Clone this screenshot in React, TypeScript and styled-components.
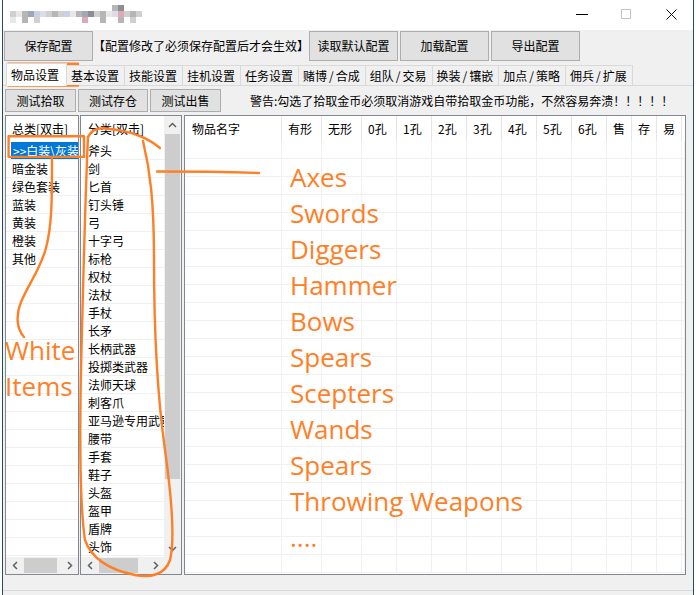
import React from "react";
import styled, { createGlobalStyle } from "styled-components";

const ORANGE = "#ff7f27";

const GlobalStyle = createGlobalStyle`
  html, body { margin: 0; padding: 0; background: #ffffff; }
  body {
    font-family: "Noto Sans CJK SC", "Microsoft YaHei", sans-serif;
    font-size: 12px;
    color: #000;
  }
  *, *::before, *::after { box-sizing: border-box; }
`;

const Stage = styled.div`
  position: relative;
  width: 696px;
  height: 595px;
  overflow: hidden;
  background: #fff;
`;

const Window = styled.div`
  margin-left: 2px;
  width: 692px;
  height: 595px;
  display: flex;
  flex-direction: column;
  background: #f0f0f0;
  border-left: 1px solid #234e5c;
  border-right: 1px solid #234e5c;
`;

const TitleBar = styled.div`
  flex: none;
  height: 30px;
  background: #fff;
  display: flex;
  align-items: flex-start;
`;

const TitleMosaic = styled.svg`
  flex: none;
  margin: 5px 0 0 7px;
`;

const Captions = styled.div`
  margin-left: auto;
  display: flex;
  height: 30px;
`;

const CaptionButton = styled.div<{ $w: number }>`
  width: ${(p) => p.$w}px;
  height: 30px;
  padding-top: 9px;
  display: flex;
  justify-content: center;
  align-items: flex-start;
`;

const ToolRow = styled.div`
  flex: none;
  display: flex;
  align-items: center;
  height: 30px;
  margin-top: 1px;
  padding-left: 1px;
`;

const PushButton = styled.button<{ $w: number; $h: number }>`
  flex: none;
  width: ${(p) => p.$w}px;
  height: ${(p) => p.$h}px;
  margin: 0;
  padding: 0;
  background: #e1e1e1;
  border: 1px solid #adadad;
  border-radius: 0;
  font-family: inherit;
  font-size: 12px;
  line-height: 1;
  color: #000;
  white-space: nowrap;
`;

const Notice = styled.div`
  flex: none;
  width: 216px;
  text-align: center;
  white-space: nowrap;
  line-height: 30px;
`;

const ButtonGroup = styled.div`
  display: flex;
  gap: 2px;
`;

const TabStrip = styled.div`
  flex: none;
  display: flex;
  align-items: flex-end;
  height: 22px;
  margin-top: 2px;
  padding-left: 3px;
  position: relative;
  z-index: 1;
`;

const Tab = styled.div<{ $active?: boolean }>`
  flex: none;
  height: ${(p) => (p.$active ? 23 : 20)}px;
  margin-bottom: ${(p) => (p.$active ? -1 : 0)}px;
  margin-left: ${(p) => (p.$active ? 0 : -1)}px;
  padding: ${(p) => (p.$active ? "0 7px 0 4px" : "0 5px 0 4px")};
  border: 1px solid #d9d9d9;
  border-bottom: none;
  background: ${(p) => (p.$active ? "#ffffff" : "#f0f0f0")};
  line-height: ${(p) => (p.$active ? 21 : 19)}px;
  white-space: nowrap;
  position: relative;
  z-index: ${(p) => (p.$active ? 2 : 1)};
`;

const Slash = styled.span`
  padding: 0 2px;
`;

const Panel = styled.div`
  flex: none;
  display: flex;
  flex-direction: column;
  border-top: 1px solid #d9d9d9;
  padding: 3px 0 0 2px;
`;

const TestRow = styled.div`
  display: flex;
  align-items: center;
  gap: 2px;
  height: 23px;
`;

const Warning = styled.div`
  margin-left: 27px;
  white-space: nowrap;
  line-height: 23px;
`;

const ListsRow = styled.div`
  display: flex;
  height: 460px;
  margin-top: 3px;
`;

const ListBox = styled.div<{ $w: number; $ml?: number }>`
  flex: none;
  width: ${(p) => p.$w}px;
  margin-left: ${(p) => p.$ml ?? 0}px;
  height: 100%;
  border: 1px solid #828790;
  background: #fff;
  display: flex;
  flex-direction: column;
`;

const ListMain = styled.div`
  flex: 1;
  min-height: 0;
  display: flex;
`;

const ListItems = styled.div`
  flex: 1;
  min-width: 0;
  overflow: hidden;
`;

const ListHead = styled.div<{ $pad: number }>`
  height: 26px;
  line-height: 26px;
  padding-left: ${(p) => p.$pad}px;
  white-space: nowrap;
`;

const ListRow = styled.div<{ $pad: number }>`
  height: 18px;
  line-height: 17px;
  border-bottom: 1px solid #f0f0f0;
  padding-left: ${(p) => p.$pad}px;
  white-space: nowrap;
  overflow: hidden;
`;

const Highlight = styled.div`
  height: 17px;
  background: #0078d7;
  color: #fff;
  padding-left: 2px;
  overflow: hidden;
`;

const VScroll = styled.div`
  flex: none;
  width: 17px;
  background: #f0f0f0;
  display: flex;
  flex-direction: column;
`;

const ScrollArrow = styled.div`
  flex: none;
  width: 17px;
  height: 17px;
  display: flex;
  align-items: center;
  justify-content: center;
`;

const VTrack = styled.div`
  flex: 1;
  padding: 1px 1px 0;
`;

const VThumb = styled.div<{ $h: number }>`
  height: ${(p) => p.$h}px;
  background: #cdcdcd;
`;

const BottomBar = styled.div`
  flex: none;
  height: 17px;
  display: flex;
`;

const HScroll = styled.div`
  flex: 1;
  display: flex;
  background: #f0f0f0;
`;

const HTrack = styled.div`
  flex: 1;
  padding: 1px 0 1px 1px;
`;

const HThumb = styled.div<{ $w: number }>`
  width: ${(p) => p.$w}px;
  height: 100%;
  background: #cdcdcd;
`;

const Corner = styled.div`
  flex: none;
  width: 17px;
  background: #f0f0f0;
`;

const GridBody = styled.div`
  flex: 1;
  overflow: hidden;
`;

const GridRow = styled.div`
  display: grid;
  grid-template-columns: 97px 40px 40px repeat(7, 35px) repeat(3, 25px) 1fr;
`;

const HeadCell = styled.div<{ $pad: number; $last?: boolean }>`
  height: 25px;
  line-height: 25px;
  padding-left: ${(p) => p.$pad}px;
  border-right: ${(p) => (p.$last ? "none" : "1px solid #e5e5e5")};
  white-space: nowrap;
  overflow: hidden;
`;

const Cell = styled.div`
  height: 18px;
  border-right: 1px solid #f0f0f0;
  border-bottom: 1px solid #f0f0f0;
`;

const StatusBar = styled.div`
  flex: none;
  height: 16px;
  border-bottom: 1px solid #d9d9d9;
`;

const Overlay = styled.div`
  position: absolute;
  inset: 0;
  pointer-events: none;
`;

const Strokes = styled.svg`
  position: absolute;
  left: 0;
  top: 0;
`;

const NoteBlock = styled.div<{ $x: number; $y: number }>`
  position: absolute;
  left: ${(p) => p.$x}px;
  top: ${(p) => p.$y}px;
  font-family: "Open Sans", "Noto Sans", sans-serif;
  font-size: 26px;
  line-height: 36px;
  color: ${ORANGE};
  white-space: nowrap;
`;

const TABS = ["物品设置", "基本设置", "技能设置", "挂机设置", "任务设置", "赌博/合成", "组队/交易", "换装/镶嵌", "加点/策略", "佣兵/扩展"];
const CATEGORIES = ["暗金装", "绿色套装", "蓝装", "黄装", "橙装", "其他"];
const SUBTYPES = ["斧头", "剑", "匕首", "钉头锤", "弓", "十字弓", "标枪", "权杖", "法杖", "手杖", "长矛", "长柄武器", "投掷类武器", "法师天球", "刺客爪", "亚马逊专用武器", "腰带", "手套", "鞋子", "头盔", "盔甲", "盾牌", "头饰"];
const COLUMNS = ["物品名字", "有形", "无形", "0孔", "1孔", "2孔", "3孔", "4孔", "5孔", "6孔", "售", "存", "易", ""];
const NOTES = ["Axes", "Swords", "Diggers", "Hammer", "Bows", "Spears", "Scepters", "Wands", "Spears", "Throwing Weapons", "...."];

const PALETTE: Record<string, string> = {
  a: "#e8e8e8",
  b: "#d0d0d0",
  c: "#b6b6b6",
  d: "#9ea6b8",
  e: "#c9d2e4",
  f: "#dcaab6",
  g: "#8e8e8e",
  h: "#bcae9e",
  i: "#dddde8",
};
const MOSAIC = [
  ".................cg...",
  "bacdeibcbeacdgbcaifbcb",
  "a.c.b.......f..c..c.b.",
];

type Dir = "up" | "down" | "left" | "right";
const Chevron = ({ dir }: { dir: Dir }) => {
  const vertical = dir === "up" || dir === "down";
  const pts = {
    up: "1,5 4.5,1.5 8,5",
    down: "1,1 4.5,4.5 8,1",
    left: "5,1 1.5,4.5 5,8",
    right: "1,1 4.5,4.5 1,8",
  }[dir];
  return (
    <svg width={vertical ? 9 : 6} height={vertical ? 6 : 9}>
      <polyline points={pts} fill="none" stroke="#606060" strokeWidth={1.5} />
    </svg>
  );
};

const HScrollBar = ({ thumb }: { thumb: number }) => (
  <HScroll>
    <ScrollArrow><Chevron dir="left" /></ScrollArrow>
    <HTrack><HThumb $w={thumb} /></HTrack>
    <ScrollArrow><Chevron dir="right" /></ScrollArrow>
  </HScroll>
);

const TabLabel = ({ text }: { text: string }) => {
  const parts = text.split("/");
  if (parts.length === 1) return <>{text}</>;
  return (
    <>
      {parts[0]}
      <Slash>/</Slash>
      {parts[1]}
    </>
  );
};

export default function App() {
  return (
    <Stage>
      <GlobalStyle />
      <Window>
        <TitleBar>
          <TitleMosaic width={132} height={18}>
            {MOSAIC.map((row, r) =>
              row.split("").map((ch, c) =>
                ch === "." ? null : (
                  <rect key={`${r}-${c}`} x={c * 6} y={r * 6} width={6} height={6} fill={PALETTE[ch]} />
                )
              )
            )}
          </TitleMosaic>
          <Captions>
            <CaptionButton $w={42}>
              <svg width={12} height={10}>
                <line x1={0} y1={5.5} x2={12} y2={5.5} stroke="#000" strokeWidth={1} />
              </svg>
            </CaptionButton>
            <CaptionButton $w={46}>
              <svg width={10} height={10}>
                <rect x={0.5} y={0.5} width={9} height={9} fill="none" stroke="#c4c4c4" strokeWidth={1} />
              </svg>
            </CaptionButton>
            <CaptionButton $w={44}>
              <svg width={11} height={11}>
                <line x1={0.5} y1={0.5} x2={10.5} y2={10.5} stroke="#111" strokeWidth={1} />
                <line x1={10.5} y1={0.5} x2={0.5} y2={10.5} stroke="#111" strokeWidth={1} />
              </svg>
            </CaptionButton>
          </Captions>
        </TitleBar>

        <ToolRow>
          <PushButton $w={89} $h={30}>保存配置</PushButton>
          <Notice>【配置修改了必须保存配置后才会生效】</Notice>
          <ButtonGroup>
            <PushButton $w={89} $h={30}>读取默认配置</PushButton>
            <PushButton $w={89} $h={30}>加载配置</PushButton>
            <PushButton $w={89} $h={30}>导出配置</PushButton>
          </ButtonGroup>
        </ToolRow>

        <TabStrip>
          {TABS.map((t, i) => (
            <Tab key={t} $active={i === 0}>
              <TabLabel text={t} />
            </Tab>
          ))}
        </TabStrip>

        <Panel>
          <TestRow>
            <PushButton $w={71} $h={23}>测试拾取</PushButton>
            <PushButton $w={70} $h={23}>测试存仓</PushButton>
            <PushButton $w={71} $h={23}>测试出售</PushButton>
            <Warning>警告:勾选了拾取金币必须取消游戏自带拾取金币功能，不然容易奔溃！！！！！</Warning>
          </TestRow>

          <ListsRow>
            <ListBox $w={74}>
              <ListMain>
                <ListItems>
                  <ListHead $pad={6}>总类[双击]</ListHead>
                  <ListRow $pad={5}>
                    <Highlight>&gt;&gt;白装\灰装</Highlight>
                  </ListRow>
                  {CATEGORIES.map((c) => (
                    <ListRow key={c} $pad={6}>{c}</ListRow>
                  ))}
                  {Array.from({ length: 17 }, (_, i) => (
                    <ListRow key={`e${i}`} $pad={6} />
                  ))}
                </ListItems>
              </ListMain>
              <BottomBar>
                <HScrollBar thumb={33} />
              </BottomBar>
            </ListBox>

            <ListBox $w={102} $ml={1}>
              <ListMain>
                <ListItems>
                  <ListHead $pad={7}>分类[双击]</ListHead>
                  {SUBTYPES.map((s) => (
                    <ListRow key={s} $pad={7}>{s}</ListRow>
                  ))}
                </ListItems>
                <VScroll>
                  <ScrollArrow><Chevron dir="up" /></ScrollArrow>
                  <VTrack><VThumb $h={345} /></VTrack>
                  <ScrollArrow><Chevron dir="down" /></ScrollArrow>
                </VScroll>
              </ListMain>
              <BottomBar>
                <HScrollBar thumb={39} />
                <Corner />
              </BottomBar>
            </ListBox>

            <ListBox $w={502} $ml={2}>
              <GridBody>
                <GridRow>
                  {COLUMNS.map((c, i) => (
                    <HeadCell key={i} $pad={i === 0 ? 7 : 6} $last={i === COLUMNS.length - 1}>{c}</HeadCell>
                  ))}
                </GridRow>
                {Array.from({ length: 24 }, (_, r) => (
                  <GridRow key={r}>
                    {COLUMNS.map((_, c) => (
                      <Cell key={c} />
                    ))}
                  </GridRow>
                ))}
              </GridBody>
            </ListBox>
          </ListsRow>
        </Panel>

        <StatusBar />
      </Window>

      <Overlay>
        <Strokes width={696} height={595}>
          <g fill="none" stroke={ORANGE} strokeWidth={2.4} strokeLinecap="round" strokeLinejoin="round">
            <rect x={8.3} y={63.7} width={69.6} height={21.8} />
            <rect x={8.6} y={136.3} width={75.4} height={20.6} />
            <path d="M52,158 C52,200 52,225 46,248 C40,270 28,285 21,302 C16,314 16,328 24,337" />
            <path d="M88,137 C92,128 100,127 110,129 C130,131 148,138 160,148" />
            <path d="M143,141 C150,170 154,200 154,260 C154,330 158,400 165,450 C172,500 175,540 170,560 C165,575 150,578 135,575 C110,570 92,560 85,540 C79,500 80,400 82,330 C84,250 86,180 88,137" />
            <path d="M157,171.5 C190,171.5 230,172 259,173" />
          </g>
        </Strokes>
        <NoteBlock $x={5} $y={332}>
          White
          <br />
          Items
        </NoteBlock>
        <NoteBlock $x={290} $y={159}>
          {NOTES.map((n, i) => (
            <div key={i}>{n}</div>
          ))}
        </NoteBlock>
      </Overlay>
    </Stage>
  );
}
